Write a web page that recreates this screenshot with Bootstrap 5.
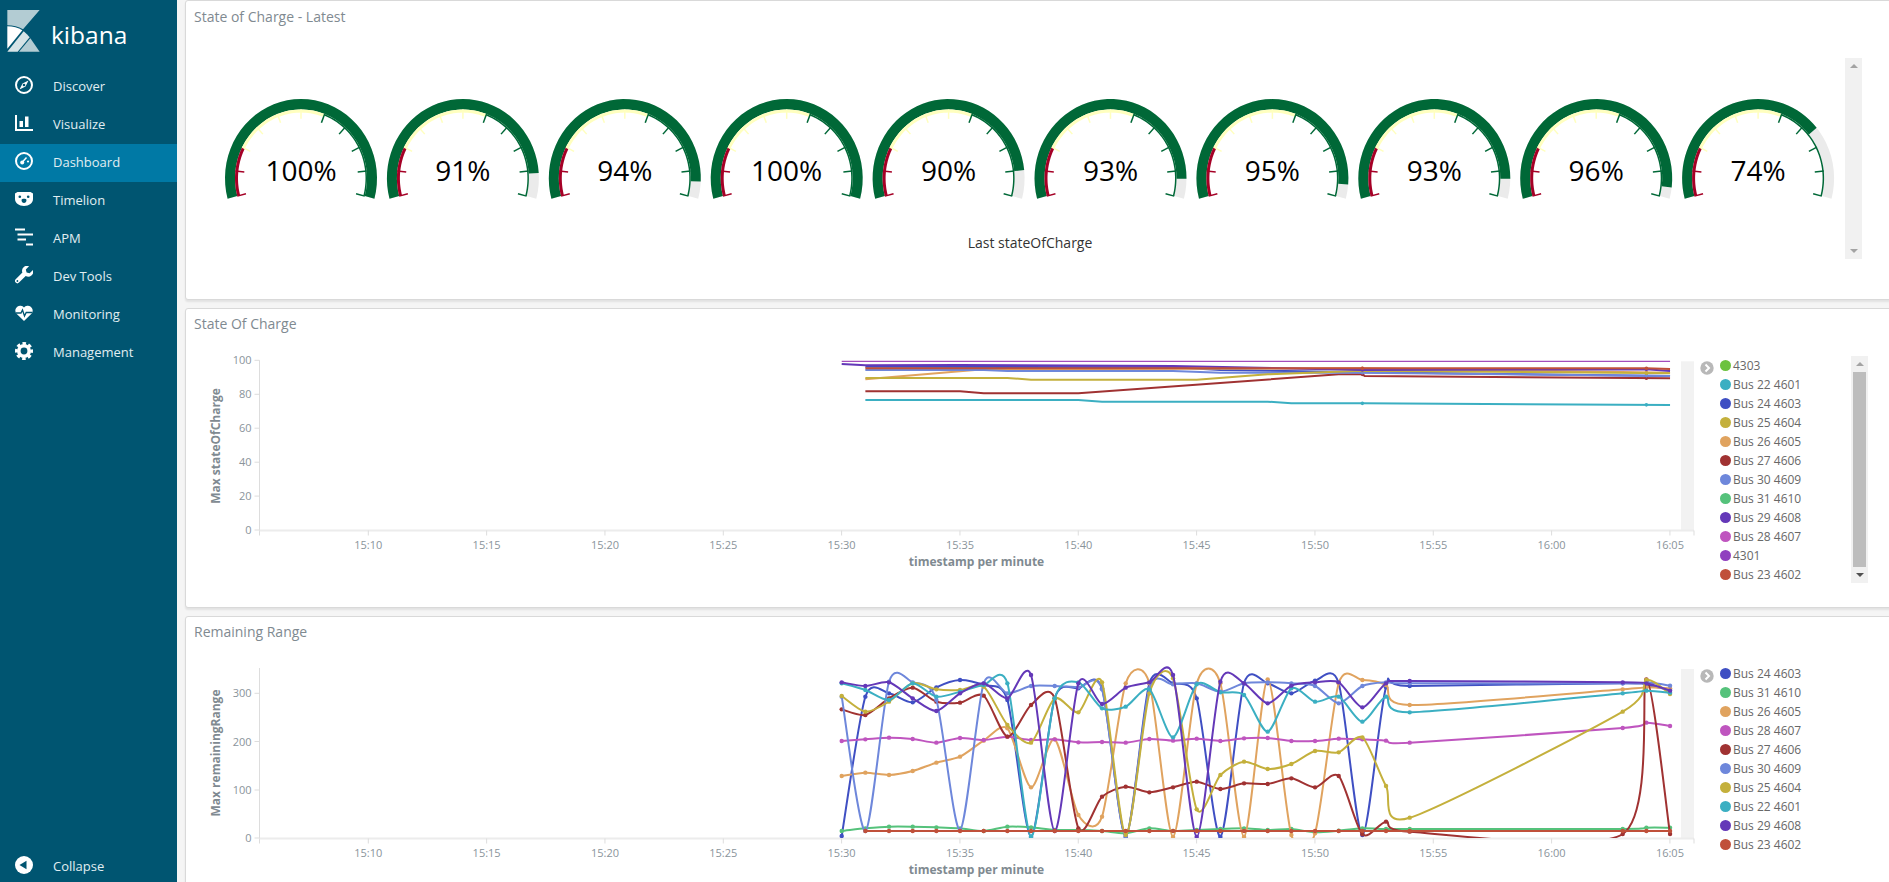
<!DOCTYPE html>
<html lang="en">
<head>
    <meta charset="UTF-8" />
    <title>Kibana Dashboard</title>
    <link href="https://cdn.jsdelivr.net/npm/bootstrap@5.3.0/dist/css/bootstrap.min.css" rel="stylesheet">
    <style>
        html, body { height: 100%; overflow: hidden; }
        body { background: #f5f5f5; font-family: "Open Sans", "Liberation Sans", sans-serif; }

        .side-bar { width: 177px; height: 882px; background: #005571; flex: none; }
        .side-logo { height: 68px; padding: 10px 0 0 7px; }
        .side-logo span { color: #fff; font-size: 24.5px; line-height: 33px; margin: 8px 0 0 11px; }
        .side-link { height: 38px; padding: 0 0 0 15px; color: #e1eef2; font-size: 13px; }
        .side-link:hover, .side-link:focus { color: #fff; }
        .side-link.is-current { background: #0079a5; }
        .side-link svg { width: 18px; height: 18px; margin: 0 20px 4px 0; flex: none; }
        .side-bottom { height: 30px; }

        .page-area { padding-left: 8px; min-width: 0; height: 882px; overflow: hidden; }
        .panel-box { width: 1720px; height: 300px; margin-bottom: 8px; flex: none; border: 1px solid #d9d9d9; border-radius: 3px; box-shadow: 0 2px 2px rgba(0,0,0,.08); }
        .panel-head { height: 31px; padding: 6px 0 0 8px; color: #7f8a91; font-size: 14px; line-height: 20px; }
        .panel-box + .panel-box .panel-head { padding-top: 5px; }
        .panel-body { height: 267px; }
        .gauge-canvas { width: 1659px; height: 267px; flex: none; }
        .chart-canvas { width: 1510px; height: 240px; flex: none; }

        .legend-wrap { padding: 16px 0 0 4px; width: 155px; flex: none; }
        .legend-toggle { width: 14px; height: 14px; margin-top: 5px; flex: none; }
        .legend-list { margin: 0 0 0 6px; padding: 0; list-style: none; }
        .legend-list li { height: 19px; color: #686868; font-size: 12px; line-height: 19px; white-space: nowrap; }
        .legend-dot { width: 11px; height: 11px; border-radius: 50%; margin-right: 2px; flex: none; }

        .fake-scroll { width: 17px; background: #f1f1f1; flex: none; }
        .gauge-scroll { height: 201px; margin-top: 26px; }
        .legend-scroll { height: 227px; margin-top: 16px; }
        .fake-thumb { width: 13px; background: #bdbdbd; margin: 0 auto; flex: 1 1 auto; }
        .arrow-up, .arrow-down { width: 0; height: 0; margin: 6px auto; border-left: 4px solid transparent; border-right: 4px solid transparent; flex: none; }
        .arrow-up { border-bottom: 4px solid #a3a3a3; }
        .arrow-down { border-top: 4px solid #a3a3a3; }
        .legend-scroll .arrow-down { border-top-color: #505050; }

        .axis-text { font-family: "Open Sans", "Liberation Sans", sans-serif; font-size: 11px; fill: #8a949b; }
        .axis-title { font-family: "Open Sans", "Liberation Sans", sans-serif; font-size: 12px; font-weight: 700; fill: #7f8a91; }
        .gauge-value { font-family: "Open Sans", "Liberation Sans", sans-serif; font-size: 28px; fill: #000; text-anchor: middle; }
        .gauge-label { font-family: "Open Sans", "Liberation Sans", sans-serif; font-size: 14px; fill: #333; text-anchor: middle; }
    </style>
</head>
<body>
<div class="d-flex">
    <nav class="side-bar d-flex flex-column">
        <div class="side-logo d-flex">
            <svg width="33" height="42" viewBox="21 30 97 126">
                <path d="M21 30H118L68 88C55 80 38 76 21 76Z" fill="#b3ccd3"/>
                <path d="M21 79C38 79 54 83 66 91L21 146Z" fill="#fff"/>
                <path d="M21 155L70 94C77 100 83 106 88 112L52 155Z" fill="#d6e3e6"/>
                <path d="M56 155L90 115L118 155Z" fill="#b3ccd3"/>
            </svg>
            <span>kibana</span>
        </div>
        <a class="nav-link side-link d-flex align-items-center" href="#">
            <svg viewBox="0 0 18 18"><circle cx="9" cy="9" r="8" fill="none" stroke="#fff" stroke-width="2"/><path d="M13.5 4.5L10.5 10.5L4.5 13.5L7.5 7.5Z" fill="#fff"/><circle cx="9" cy="9" r="1.3" fill="#005571"/></svg>
            Discover
        </a>
        <a class="nav-link side-link d-flex align-items-center" href="#">
            <svg viewBox="0 0 18 18"><path d="M1 1V16H18" fill="none" stroke="#fff" stroke-width="2"/><rect x="4.5" y="7" width="3.5" height="6" fill="#fff"/><rect x="10" y="2.5" width="3.5" height="10.5" fill="#fff"/></svg>
            Visualize
        </a>
        <a class="nav-link side-link is-current d-flex align-items-center" href="#">
            <svg viewBox="0 0 18 18"><circle cx="9" cy="9" r="8" fill="none" stroke="#fff" stroke-width="2"/><circle cx="7.2" cy="10.5" r="2" fill="#fff"/><path d="M7.5 10L11.5 5.5" stroke="#fff" stroke-width="1.5"/><circle cx="13" cy="9.5" r="1.1" fill="#fff"/></svg>
            Dashboard
        </a>
        <a class="nav-link side-link d-flex align-items-center" href="#">
            <svg viewBox="0 0 18 18"><path d="M0 3.5L2.5 2H15.5L18 3.5V9C18 13 14 16 9 16S0 13 0 9Z" fill="#fff"/><circle cx="4.8" cy="6.8" r="1.3" fill="#005571"/><circle cx="13.2" cy="6.8" r="1.3" fill="#005571"/><path d="M6.5 10C6.5 8.2 11.5 8.2 11.5 10S10.3 13 9 13S6.5 11.8 6.5 10Z" fill="#005571"/></svg>
            Timelion
        </a>
        <a class="nav-link side-link d-flex align-items-center" href="#">
            <svg viewBox="0 0 18 18"><path d="M0 1.5H10M2.5 6.5H18M2.5 11.5H11M11 16.5H18.5" stroke="#fff" stroke-width="2" fill="none"/></svg>
            APM
        </a>
        <a class="nav-link side-link d-flex align-items-center" href="#">
            <svg viewBox="0 0 18 18"><path d="M18 4L14.6 7.2L11.6 6.4L10.8 3.4L14 0.2A5 5 0 0 0 7.4 6.6L0.7 13.3A2.3 2.3 0 0 0 4 16.6L10.7 9.9A5 5 0 0 0 18 4Z" fill="#fff"/><circle cx="2.4" cy="15" r="0.9" fill="#005571"/></svg>
            Dev Tools
        </a>
        <a class="nav-link side-link d-flex align-items-center" href="#">
            <svg viewBox="0 0 18 18"><path d="M9 17L1.3 9.4A4.7 4.7 0 0 1 9 3.6A4.7 4.7 0 0 1 16.7 9.4Z" fill="#fff"/><path d="M1 9H6L7.5 6L9.5 12L11.2 8.5H17" fill="none" stroke="#005571" stroke-width="1.3"/></svg>
            Monitoring
        </a>
        <a class="nav-link side-link d-flex align-items-center" href="#">
            <svg viewBox="0 0 18 18"><circle cx="9" cy="9" r="5.2" fill="none" stroke="#fff" stroke-width="3.6"/><circle cx="9" cy="9" r="7.6" fill="none" stroke="#fff" stroke-width="2.8" stroke-dasharray="3.5 2.47" stroke-dashoffset="1.75"/></svg>
            Management
        </a>
        <a class="nav-link side-link side-bottom mt-auto d-flex align-items-center" href="#">
            <svg viewBox="0 0 18 18"><circle cx="9" cy="9" r="9" fill="#fff"/><path d="M4.5 9L11.5 4.8V13.2Z" fill="#005571"/></svg>
            Collapse
        </a>
    </nav>

    <main class="page-area flex-grow-1 d-flex flex-column">
        <section class="card panel-box">
            <div class="panel-head">State of Charge - Latest</div>
            <div class="panel-body d-flex">
                <svg class="gauge-canvas" id="gauges" viewBox="186 32 1659 267"></svg>
                <div class="fake-scroll gauge-scroll d-flex flex-column justify-content-between">
                    <div class="arrow-up"></div>
                    <div class="arrow-down"></div>
                </div>
            </div>
        </section>

        <section class="card panel-box">
            <div class="panel-head">State Of Charge</div>
            <div class="panel-body d-flex">
                <svg class="chart-canvas" id="chartCharge" viewBox="186 340 1510 240"></svg>
                <div class="legend-wrap d-flex" id="legendCharge"></div>
                <div class="fake-scroll legend-scroll d-flex flex-column">
                    <div class="arrow-up"></div>
                    <div class="fake-thumb"></div>
                    <div class="arrow-down"></div>
                </div>
            </div>
        </section>

        <section class="card panel-box">
            <div class="panel-head">Remaining Range</div>
            <div class="panel-body d-flex">
                <svg class="chart-canvas" id="chartRange" viewBox="186 648 1510 240"></svg>
                <div class="legend-wrap d-flex" id="legendRange"></div>
            </div>
        </section>
    </main>
</div>

<script src="https://cdn.jsdelivr.net/npm/bootstrap@5.3.0/dist/js/bootstrap.bundle.min.js"></script>
<script>
    const NS = 'http://www.w3.org/2000/svg';
    const COLORS = {
        '4303': '#6cc23f', 'Bus 22 4601': '#3bafc2', 'Bus 24 4603': '#3f4fc3', 'Bus 25 4604': '#c4b03c',
        'Bus 26 4605': '#e0a35f', 'Bus 27 4606': '#a03232', 'Bus 30 4609': '#6e87db', 'Bus 31 4610': '#55c27b',
        'Bus 29 4608': '#6438b8', 'Bus 28 4607': '#bf55bf', '4301': '#9040bf', 'Bus 23 4602': '#c0503a'
    };

    function add(parent, tag, attrs, text) {
        const el = document.createElementNS(NS, tag);
        for (const k in attrs) el.setAttribute(k, attrs[k]);
        if (text !== undefined) el.textContent = text;
        parent.appendChild(el);
        return el;
    }

    // gauges
    const gaugeSvg = document.getElementById('gauges');
    const GREEN = '#006837', RED = '#a50026', YELLOW = '#ffffbf';

    function arcPath(cx, cy, r0, r1, a0, a1) {
        const pts = [], back = [];
        for (let i = 0; i <= 40; i++) {
            const a = (a0 + (a1 - a0) * i / 40) * Math.PI / 180;
            pts.push((cx + r1 * Math.sin(a)).toFixed(2) + ' ' + (cy - r1 * 1.043 * Math.cos(a)).toFixed(2));
            back.unshift((cx + r0 * Math.sin(a)).toFixed(2) + ' ' + (cy - r0 * 1.043 * Math.cos(a)).toFixed(2));
        }
        return 'M' + pts.concat(back).join('L') + 'Z';
    }

    [100, 91, 94, 100, 90, 93, 95, 93, 96, 74].forEach((v, n) => {
        const cx = 301 + 161.9 * n, cy = 178.3;
        add(gaugeSvg, 'path', { d: arcPath(cx, cy, 66, 76, -105, 105), fill: '#ebebeb' });
        add(gaugeSvg, 'path', { d: arcPath(cx, cy, 66, 76, -105, -105 + 210 * v / 100), fill: GREEN });
        add(gaugeSvg, 'path', { d: arcPath(cx, cy, 63, 66, -105, -63), fill: RED });
        add(gaugeSvg, 'path', { d: arcPath(cx, cy, 63, 66, -63, 21), fill: YELLOW });
        add(gaugeSvg, 'path', { d: arcPath(cx, cy, 64.5, 66, 21, 105), fill: GREEN });
        for (let t = 0; t <= 10; t++) {
            const a = (-105 + 21 * t) * Math.PI / 180;
            add(gaugeSvg, 'line', {
                x1: cx + 66 * Math.sin(a), y1: cy - 66 * 1.043 * Math.cos(a),
                x2: cx + 57 * Math.sin(a), y2: cy - 57 * 1.043 * Math.cos(a),
                stroke: t < 2 ? RED : t < 6 ? YELLOW : GREEN, 'stroke-width': 1.5
            });
        }
        add(gaugeSvg, 'text', { x: cx, y: 181, class: 'gauge-value' }, v + '%');
    });
    add(gaugeSvg, 'text', { x: 1030, y: 248, class: 'gauge-label' }, 'Last stateOfCharge');

    // axes shared by both line charts
    function drawAxes(svg, base, topY, ticks, title, titleY) {
        const x0 = 259.5, x1 = 1694;
        add(svg, 'rect', { x: 1681, y: topY + 1, width: 13, height: base - topY - 1, fill: '#f2f2f2' });
        add(svg, 'line', { x1: x0, x2: x0, y1: topY, y2: base + 5, stroke: '#ddd' });
        add(svg, 'line', { x1: x0, x2: x1, y1: base, y2: base, stroke: '#ececec', 'stroke-width': 2 });
        add(svg, 'line', { x1: x1, x2: x1, y1: base, y2: base + 5, stroke: '#ddd' });
        ticks.forEach(t => {
            add(svg, 'line', { x1: x0 - 5, x2: x0, y1: t[1], y2: t[1], stroke: '#ddd' });
            add(svg, 'text', { x: 251.5, y: t[1] + 4, class: 'axis-text', 'text-anchor': 'end' }, t[0]);
        });
        const labels = ['15:10', '15:15', '15:20', '15:25', '15:30', '15:35', '15:40', '15:45', '15:50', '15:55', '16:00', '16:05'];
        labels.forEach((l, i) => {
            const x = 368.3 + 118.33 * i;
            add(svg, 'line', { x1: x, x2: x, y1: base, y2: base + 5, stroke: '#ddd' });
            add(svg, 'text', { x: x, y: base + 18, class: 'axis-text', 'text-anchor': 'middle' }, l);
        });
        add(svg, 'text', { x: 976.5, y: base + 35, class: 'axis-title', 'text-anchor': 'middle' }, 'timestamp per minute');
        add(svg, 'text', { transform: 'translate(220 ' + titleY + ') rotate(-90)', class: 'axis-title', 'text-anchor': 'middle' }, title);
    }

    function legend(id, names) {
        const box = document.getElementById(id);
        box.innerHTML = '<svg class="legend-toggle" viewBox="0 0 14 14"><circle cx="7" cy="7" r="6.7" fill="#b8b8b8"/><path d="M5.5 3.5L9 7L5.5 10.5" fill="none" stroke="#fff" stroke-width="2"/></svg>' +
            '<ul class="legend-list">' + names.map(n =>
                `<li class="d-flex align-items-center"><span class="legend-dot" style="background:${COLORS[n]}"></span>${n}</li>`).join('') + '</ul>';
    }

    const minuteX = i => 841.7 + 23.667 * i;

    // Remaining Range: values are screen offsets read per minute, minutes 25-32 have no data
    const MINUTES = [];
    for (let i = 0; i <= 24; i++) MINUTES.push(i);
    MINUTES.push(33, 34, 35);

    const RANGE = {
        'Bus 24 4603': [558,140,130,157,112,90,105,150,560,145,115,115,560,100,100,145,560,100,100,130,92,100,555,112,108,100,105,120],
        'Bus 31 4610': [543,535,530,530,532,535,543,530,532,540,540,543,550,535,543,540,537,535,540,537,547,542,535,537,537,537,533,533],
        'Bus 26 4605': [378,368,375,363,338,320,272,235,412,268,495,500,100,100,560,100,100,560,88,555,550,100,90,105,165,118,112,115],
        'Bus 28 4607': [273,268,263,267,278,264,270,260,270,268,277,276,278,267,272,266,273,265,264,273,273,266,268,272,278,234,218,228],
        'Bus 27 4606': [178,195,145,113,155,158,137,260,165,145,535,440,410,427,412,395,417,400,402,385,412,378,553,515,545,552,88,552],
        'Bus 30 4609': [140,543,95,97,150,540,100,130,108,108,112,118,558,115,103,100,125,100,97,100,108,160,108,97,100,100,97,107],
        'Bus 25 4604': [138,185,155,100,118,120,110,225,278,145,187,97,555,130,85,478,375,335,357,342,303,307,262,408,503,185,90,132],
        'Bus 22 4601': [100,120,150,100,140,125,105,100,560,145,97,175,170,118,262,103,127,135,245,115,155,140,215,140,187,130,122,128],
        'Bus 29 4608': [97,108,97,145,183,130,100,145,75,543,100,162,113,97,75,560,95,100,160,107,97,97,172,100,93,97,100,122],
        'Bus 23 4602': [null,543,543,543,543,543,543,543,543,543,543,543,543,543,543,543,543,543,543,543,543,543,543,543,543,543,543,543]
    };

    const BEND = 0.13;

    function smoothPath(p) {
        let d = 'M' + p[0][0] + ' ' + p[0][1];
        for (let i = 0; i < p.length - 1; i++) {
            const a = p[Math.max(i - 1, 0)], b = p[i], c = p[i + 1], e = p[Math.min(i + 2, p.length - 1)];
            d += 'C' + (b[0] + (c[0] - a[0]) * BEND).toFixed(1) + ' ' + (b[1] + (c[1] - a[1]) * BEND).toFixed(1) + ' ' +
                (c[0] - (e[0] - b[0]) * BEND).toFixed(1) + ' ' + (c[1] - (e[1] - b[1]) * BEND).toFixed(1) + ' ' + c[0].toFixed(1) + ' ' + c[1].toFixed(1);
        }
        return d;
    }

    const rangeSvg = document.getElementById('chartRange');
    drawAxes(rangeSvg, 838.5, 668, [['300', 693.3], ['200', 741.5], ['100', 790], ['0', 838]], 'Max remainingRange', 753);
    const defs = add(rangeSvg, 'defs', {});
    add(add(defs, 'clipPath', { id: 'rangeClip' }), 'rect', { x: 830, y: 648, width: 860, height: 190 });
    const rangeGroup = add(rangeSvg, 'g', { 'clip-path': 'url(#rangeClip)' });
    Object.keys(RANGE).forEach(name => {
        const pts = [];
        RANGE[name].forEach((z, i) => { if (z !== null) pts.push([minuteX(MINUTES[i]), 650 + z / 3]); });
        add(rangeGroup, 'path', { d: smoothPath(pts), fill: 'none', stroke: COLORS[name], 'stroke-width': 2 });
        pts.forEach(p => add(rangeGroup, 'circle', { cx: p[0], cy: p[1], r: 2.2, fill: COLORS[name] }));
    });
    legend('legendRange', Object.keys(RANGE));

    // State Of Charge: [minute, offset] pairs, mostly flat
    const CHARGE = {
        'Bus 22 4601': [[1,180],[10,180],[11,185],[18,185],[19,190],[22,190],[35,195]],
        'Bus 24 4603': [[1,80],[14,82],[16,90],[22,97],[35,108]],
        'Bus 26 4605': [[1,118],[6,88],[22,85],[35,98]],
        'Bus 27 4606': [[1,154],[5,154],[6,160],[10,160],[21,103],[22,103],[22.1,108],[35,115]],
        'Bus 30 4609': [[1,90],[6,90],[7,93],[14,93],[16,98],[22,98],[35,108]],
        'Bus 25 4604': [[1,114],[7,114],[8,119],[15,119],[18,103],[22,92],[35,100]],
        'Bus 29 4608': [[0,72],[1,76],[5,75],[14,78],[22,90],[34,88],[35,93]],
        'Bus 23 4602': [[1,85],[34,85],[35,87]],
        '4301': [[0,64],[35,64]]
    };
    const chargeSvg = document.getElementById('chartCharge');
    drawAxes(chargeSvg, 530.5, 360.3, [['100', 360.3], ['80', 394.3], ['60', 428.2], ['40', 462.2], ['20', 496.1], ['0', 530]], 'Max stateOfCharge', 446);
    const valueAt = (line, m) => {
        for (let i = 0; i < line.length - 1; i++) {
            if (m >= line[i][0] && m <= line[i + 1][0]) {
                return line[i][1] + (line[i + 1][1] - line[i][1]) * (m - line[i][0]) / (line[i + 1][0] - line[i][0]);
            }
        }
        return line[line.length - 1][1];
    };
    Object.keys(CHARGE).forEach(name => {
        const pts = CHARGE[name].map(p => [minuteX(p[0]), 340 + p[1] / 3]);
        const thin = name === '4301';
        add(chargeSvg, 'polyline', { points: pts.map(p => p.join(',')).join(' '), fill: 'none', stroke: thin ? '#a34dbb' : COLORS[name], 'stroke-width': thin ? 1.3 : 2 });
        if (!thin) [22, 34].forEach(m => add(chargeSvg, 'circle', { cx: minuteX(m), cy: 340 + valueAt(CHARGE[name], m) / 3, r: 1.8, fill: COLORS[name] }));
    });
    legend('legendCharge', ['4303', 'Bus 22 4601', 'Bus 24 4603', 'Bus 25 4604', 'Bus 26 4605', 'Bus 27 4606', 'Bus 30 4609', 'Bus 31 4610', 'Bus 29 4608', 'Bus 28 4607', '4301', 'Bus 23 4602']);
</script>
</body>
</html>
